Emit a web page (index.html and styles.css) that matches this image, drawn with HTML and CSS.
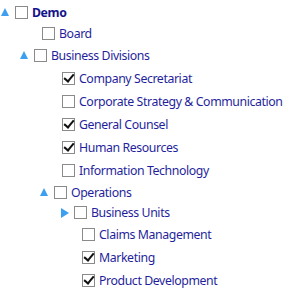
FILE: index.html
```html
<!DOCTYPE html>
<html lang="en">
<head>
  <meta charset="UTF-8">
  <title>Tree</title>
  <link rel="stylesheet" href="styles.css">
</head>
<body>

  <!-- 組織ツリー -->
  <ul class="tree">
    <li class="row h21 ind0"><span class="toggle open"></span><span class="box"></span><span class="label bold">Demo</span></li>
    <li class="row h22 ind-board"><span class="box"></span><span class="label">Board</span></li>
    <li class="row h23 ind1"><span class="toggle open"></span><span class="box"></span><span class="label">Business Divisions</span></li>
    <li class="row h23 ind-leaf2"><span class="box checked"></span><span class="label">Company Secretariat</span></li>
    <li class="row h23 ind-leaf2"><span class="box"></span><span class="label">Corporate Strategy &amp; Communication</span></li>
    <li class="row h23 ind-leaf2"><span class="box checked"></span><span class="label">General Counsel</span></li>
    <li class="row h23 ind-leaf2"><span class="box checked"></span><span class="label">Human Resources</span></li>
    <li class="row h22 ind-leaf2"><span class="box"></span><span class="label">Information Technology</span></li>
    <li class="row h20 ind2"><span class="toggle open"></span><span class="box"></span><span class="label">Operations</span></li>
    <li class="row h22 ind3"><span class="toggle closed"></span><span class="box"></span><span class="label">Business Units</span></li>
    <li class="row h23 ind-leaf4"><span class="box"></span><span class="label">Claims Management</span></li>
    <li class="row h23 ind-leaf4"><span class="box checked"></span><span class="label">Marketing</span></li>
    <li class="row h23 ind-leaf4"><span class="box checked"></span><span class="label">Product Development</span></li>
  </ul>

</body>
</html>
```
FILE: styles.css
```css
body {
  margin: 0;
  background: #fff;
  font-family: "Noto Sans", "Open Sans", sans-serif;
  font-size: 12.3px;
  letter-spacing: -0.4px;
  color: #1f1f9c;
}

.tree {
  list-style: none;
  margin: 0;
  padding: 6px 0 0 0;
}

.row {
  display: flex;
  align-items: flex-start;
  white-space: nowrap;
}

.h20 { height: 20px; }
.h21 { height: 21px; }
.h22 { height: 22px; }
.h23 { height: 23px; }

/* インデント */
.ind0 { padding-left: 1px; }
.ind1 { padding-left: 20px; }
.ind2 { padding-left: 40px; }
.ind3 { padding-left: 60px; }
.ind-board { padding-left: 42px; }
.ind-leaf2 { padding-left: 62px; }
.ind-leaf4 { padding-left: 82px; }

.toggle {
  width: 9px;
  height: 13px;
  margin-right: 5px;
  position: relative;
}

.toggle.open::before {
  content: "";
  position: absolute;
  left: 0;
  top: 2px;
  border-left: 4.5px solid transparent;
  border-right: 4.5px solid transparent;
  border-bottom: 8px solid #3c9ff0;
}

.toggle.closed::before {
  content: "";
  position: absolute;
  left: 1px;
  top: 2px;
  border-top: 5px solid transparent;
  border-bottom: 5px solid transparent;
  border-left: 8px solid #3c9ff0;
}

.box {
  width: 11px;
  height: 11px;
  border: 1px solid #8a8a8a;
  background: #fff;
  margin-right: 4px;
  position: relative;
  flex: none;
}

.box.checked::after {
  content: "";
  position: absolute;
  left: 3px;
  top: -1px;
  width: 4px;
  height: 8px;
  border-right: 2.5px solid #111;
  border-bottom: 2.5px solid #111;
  transform: rotate(40deg);
}

.label {
  line-height: 14px;
  margin-top: 0;
}

.bold {
  font-weight: bold;
  color: #14148a;
}
```
